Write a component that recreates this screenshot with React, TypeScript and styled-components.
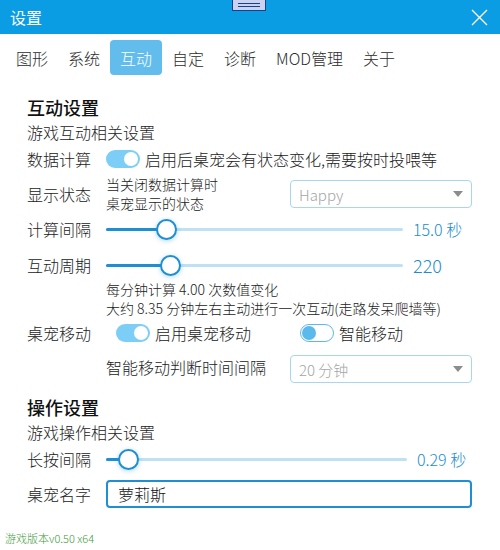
import styled, { createGlobalStyle } from "styled-components";

const GlobalStyle = createGlobalStyle`
  html, body {
    margin: 0;
    padding: 0;
    background: #ffffff;
  }
  body {
    font-family: "Noto Sans CJK SC", "Noto Sans", sans-serif;
    font-weight: 300;
    color: #1f1f1f;
  }
`;

const Window = styled.div`
  width: 500px;
  height: 550px;
  display: flex;
  flex-direction: column;
  overflow: hidden;
`;

const TitleBar = styled.div`
  height: 34px;
  flex-shrink: 0;
  background: #0b9de4;
  display: flex;
  align-items: center;
  justify-content: space-between;
  padding: 0 10px;
  position: relative;
  color: #ffffff;
  font-size: 16px;
  font-weight: 400;
`;

const DragHandle = styled.div`
  position: absolute;
  left: 232px;
  top: 0;
  width: 34px;
  height: 11px;
  box-sizing: border-box;
  background: #c9d2f3;
  border: 1px solid #1d3f86;
  border-top: none;
  display: flex;
  flex-direction: column;
  justify-content: center;
  align-items: center;
  gap: 2px;
  & > span {
    display: block;
    width: 22px;
    height: 1px;
    background: #1d3f86;
  }
`;

const CloseButton = styled.div`
  width: 18px;
  height: 18px;
  display: flex;
  align-items: center;
  justify-content: center;
  margin-right: 2px;
`;

const TabBar = styled.div`
  display: flex;
  margin-top: 6px;
  padding-left: 6px;
  height: 35px;
`;

const Tab = styled.div<{ $active?: boolean }>`
  padding: 0 10px;
  display: flex;
  align-items: center;
  font-size: 16px;
  border-radius: 4px;
  color: ${(p) => (p.$active ? "#ffffff" : "#2b2b2b")};
  background: ${(p) => (p.$active ? "#62bdec" : "transparent")};
`;

const Content = styled.div`
  padding: 0 28px 0 27px;
  display: flex;
  flex-direction: column;
`;

const Heading = styled.div<{ $top: number }>`
  margin-top: ${(p) => p.$top}px;
  font-size: 18px;
  font-weight: 500;
  line-height: 24px;
  color: #111;
`;

const SubTitle = styled.div`
  font-size: 16px;
  line-height: 24px;
  margin-top: 1px;
  color: #222;
`;

const Row = styled.div<{ $h: number; $top?: number; $align?: string }>`
  display: grid;
  grid-template-columns: 79px 1fr;
  align-items: ${(p) => p.$align ?? "center"};
  height: ${(p) => p.$h}px;
  margin-top: ${(p) => p.$top ?? 0}px;
`;

const Label = styled.div<{ $shift?: number }>`
  font-size: 16px;
  line-height: 20px;
  color: #222;
  white-space: nowrap;
  margin-top: ${(p) => p.$shift ?? 0}px;
`;

const Inline = styled.div<{ $indent?: number }>`
  display: flex;
  align-items: center;
  padding-left: ${(p) => p.$indent ?? 0}px;
`;

const Text = styled.span<{ $size?: number }>`
  font-size: ${(p) => p.$size ?? 16}px;
  color: #222;
  white-space: nowrap;
`;

const Toggle = styled.div<{ $on: boolean }>`
  width: 34px;
  height: 18px;
  box-sizing: border-box;
  border-radius: 9px;
  flex-shrink: 0;
  background: ${(p) => (p.$on ? "#7dcef7" : "#ffffff")};
  border: ${(p) => (p.$on ? "none" : "1.5px solid #5bb9ec")};
  display: flex;
  align-items: center;
  justify-content: ${(p) => (p.$on ? "flex-end" : "flex-start")};
  padding: 0 2px;
  margin-right: 5px;
  &::after {
    content: "";
    width: 14px;
    height: 14px;
    border-radius: 50%;
    background: ${(p) => (p.$on ? "#ffffff" : "#5bb9ec")};
    margin-left: ${(p) => (p.$on ? 0 : -1)}px;
  }
`;

const Split = styled.div`
  display: flex;
  align-items: center;
`;

const HintBlock = styled.div`
  flex: 1;
`;

const Hint = styled.div`
  font-size: 14px;
  line-height: 19px;
  color: #222;
  white-space: nowrap;
`;

const Select = styled.div`
  width: 182px;
  height: 28px;
  box-sizing: border-box;
  border: 1.5px solid #a6d7ee;
  border-radius: 4px;
  display: flex;
  align-items: center;
  justify-content: space-between;
  padding: 0 8px 0 8px;
  color: #a5a5a5;
  font-size: 15px;
  &::after {
    content: "";
    border-left: 5px solid transparent;
    border-right: 5px solid transparent;
    border-top: 6px solid #8c8c8c;
  }
`;

const SliderWrap = styled.div`
  display: flex;
  align-items: center;
`;

const Track = styled.div`
  flex: 1;
  height: 3px;
  position: relative;
  background: #bee2f4;
  border-radius: 2px;
`;

const Fill = styled.div`
  position: absolute;
  left: 0;
  top: 0;
  bottom: 0;
  background: #1e8fd2;
  border-radius: 2px;
`;

const Thumb = styled.div`
  position: absolute;
  top: 50%;
  width: 21px;
  height: 21px;
  box-sizing: border-box;
  margin-left: -10.5px;
  margin-top: -10.5px;
  border-radius: 50%;
  background: #ffffff;
  border: 2px solid #1e8fd2;
  box-shadow: 0 1px 5px rgba(30, 143, 210, 0.35);
`;

const Value = styled.div<{ $w: number; $size?: number }>`
  width: ${(p) => p.$w}px;
  margin-left: 10px;
  color: #1b8dd0;
  font-size: ${(p) => p.$size ?? 16}px;
  white-space: nowrap;
`;

const NameInput = styled.div`
  height: 28px;
  box-sizing: border-box;
  border: 2px solid #1e8fd2;
  border-radius: 4px;
  display: flex;
  align-items: center;
  padding-left: 10px;
  font-size: 16px;
  color: #111;
`;

const Footer = styled.div`
  margin-top: 23px;
  padding-left: 5px;
  font-size: 11px;
  line-height: 14px;
  color: #3b9a37;
`;

function Slider({ pos, value, w, size }: { pos: number; value: string; w: number; size?: number }) {
  return (
    <SliderWrap>
      <Track>
        <Fill style={{ width: pos }} />
        <Thumb style={{ left: pos }} />
      </Track>
      <Value $w={w} $size={size}>{value}</Value>
    </SliderWrap>
  );
}

const tabs = ["图形", "系统", "互动", "自定", "诊断", "MOD管理", "关于"];

export default function App() {
  return (
    <>
      <GlobalStyle />
      <Window>
        <TitleBar>
          <span>设置</span>
          <DragHandle>
            <span />
            <span />
          </DragHandle>
          <CloseButton>
            <svg width="17" height="17" viewBox="0 0 17 17">
              <path d="M1 1 L16 16 M16 1 L1 16" stroke="#ffffff" strokeWidth="1.3" fill="none" />
            </svg>
          </CloseButton>
        </TitleBar>

        <TabBar>
          {tabs.map((t) => (
            <Tab key={t} $active={t === "互动"}>
              {t}
            </Tab>
          ))}
        </TabBar>

        <Content>
          <Heading $top={20}>互动设置</Heading>
          <SubTitle>游戏互动相关设置</SubTitle>

          <Row $h={30}>
            <Label>数据计算</Label>
            <Inline>
              <Toggle $on />
              <Text>启用后桌宠会有状态变化,需要按时投喂等</Text>
            </Inline>
          </Row>

          <Row $h={40}>
            <Label>显示状态</Label>
            <Split>
              <HintBlock>
                <Hint>当关闭数据计算时</Hint>
                <Hint>桌宠显示的状态</Hint>
              </HintBlock>
              <Select>Happy</Select>
            </Split>
          </Row>

          <Row $h={30}>
            <Label>计算间隔</Label>
            <Slider pos={60} value="15.0 秒" w={59} />
          </Row>

          <Row $h={30} $top={6}>
            <Label>互动周期</Label>
            <Slider pos={64} value="220" w={59} size={18} />
          </Row>

          <Row $h={38}>
            <span />
            <div>
              <Hint>每分钟计算 4.00 次数值变化</Hint>
              <Hint>大约 8.35 分钟左右主动进行一次互动(走路发呆爬墙等)</Hint>
            </div>
          </Row>

          <Row $h={30}>
            <Label>桌宠移动</Label>
            <Split>
              <Inline $indent={10} style={{ width: 184 }}>
                <Toggle $on />
                <Text>启用桌宠移动</Text>
              </Inline>
              <Inline>
                <Toggle $on={false} />
                <Text>智能移动</Text>
              </Inline>
            </Split>
          </Row>

          <Row $h={28} $top={7} $align="start">
            <span />
            <Split>
              <Label $shift={-4} style={{ flex: 1 }}>
                智能移动判断时间间隔
              </Label>
              <Select>20 分钟</Select>
            </Split>
          </Row>

          <Heading $top={12}>操作设置</Heading>
          <SubTitle>游戏操作相关设置</SubTitle>

          <Row $h={30}>
            <Label>长按间隔</Label>
            <Slider pos={22} value="0.29 秒" w={55} />
          </Row>

          <Row $h={28} $top={6}>
            <Label>桌宠名字</Label>
            <NameInput>萝莉斯</NameInput>
          </Row>
        </Content>

        <Footer>游戏版本v0.50 x64</Footer>
      </Window>
    </>
  );
}
